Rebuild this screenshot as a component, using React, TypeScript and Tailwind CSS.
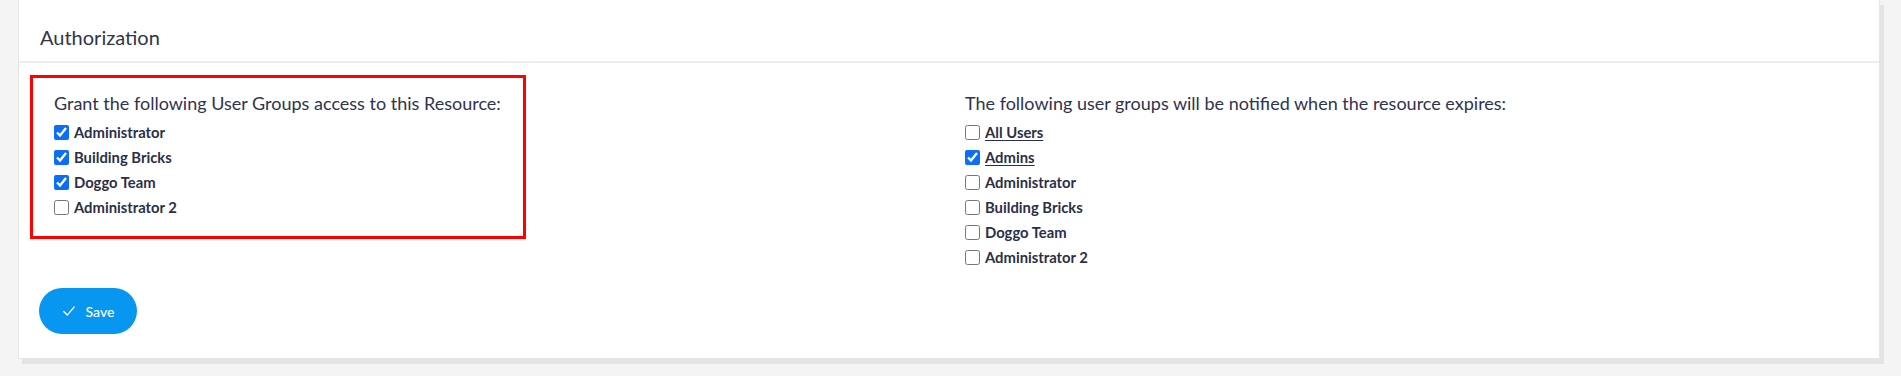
import React from 'react';

type Group = { name: string; checked: boolean; link?: boolean };

const accessGroups: Group[] = [
  { name: 'Administrator', checked: true },
  { name: 'Building Bricks', checked: true },
  { name: 'Doggo Team', checked: true },
  { name: 'Administrator 2', checked: false }
];

const notifyGroups: Group[] = [
  { name: 'All Users', checked: false, link: true },
  { name: 'Admins', checked: true, link: true },
  { name: 'Administrator', checked: false },
  { name: 'Building Bricks', checked: false },
  { name: 'Doggo Team', checked: false },
  { name: 'Administrator 2', checked: false }
];

const GroupRow = ({ group }: { group: Group }) => (
  <label className="flex items-center h-[25px] gap-[5px] cursor-pointer">
    <input
      type="checkbox"
      defaultChecked={group.checked}
      className="m-0 w-[15px] h-[15px] accent-[#0b6ef5]"
    />
    <span
      className={
        group.link
          ? 'text-[14.8px] font-bold text-[#2b2f48] underline underline-offset-2'
          : 'text-[14.8px] font-bold text-[#2b2f48]'
      }
    >
      {group.name}
    </span>
  </label>
);

const App = () => {
  return (
    <div className="min-h-screen bg-[#f4f4f4] pl-[18px] pr-[21px] font-['Lato',sans-serif]">
      <div className="bg-white border border-t-0 border-[#e6e6e6] shadow-[4px_5px_0_#e4e4e4]">
        {/* header */}
        <div className="pt-[23px] pb-[10px] pl-[21px] border-b-2 border-[#e9eef3]">
          <h2 className="text-[20px] leading-[28px] text-[#30354a]">Authorization</h2>
        </div>

        <div className="px-[11px] pt-[12px]">
          <div className="grid grid-cols-2">
            <div>
              <div className="w-[496px] border-[3px] border-[#ff0000] pt-[11px] pb-[16px] pl-[21px]">
                <p className="text-[18px] leading-[28px] text-[#2e3350]">
                  Grant the following User Groups access to this Resource:
                </p>
                <div className="mt-[3px] flex flex-col">
                  {accessGroups.map((g) => (
                    <GroupRow key={g.name} group={g} />
                  ))}
                </div>
              </div>
            </div>
            <div className="pt-[14px] pl-[16px]">
              <p className="text-[18px] leading-[28px] text-[#2e3350]">
                The following user groups will be notified when the resource expires:
              </p>
              <div className="mt-[3px] flex flex-col">
                {notifyGroups.map((g) => (
                  <GroupRow key={g.name} group={g} />
                ))}
              </div>
            </div>
          </div>
        </div>

        <div className="px-[20px] pt-[18px] pb-[24px]">
          <button className="flex items-center justify-center gap-[10px] w-[98px] h-[46px] rounded-full bg-[#0797f0] text-white text-[14px] font-medium">
            <svg width="14" height="14" viewBox="0 0 24 24" fill="none" stroke="currentColor" strokeWidth="2.4" strokeLinecap="round" strokeLinejoin="round">
              <path d="M3 13l6 6L21 5" />
            </svg>
            Save
          </button>
        </div>
      </div>
    </div>
  );
};

export default App;
